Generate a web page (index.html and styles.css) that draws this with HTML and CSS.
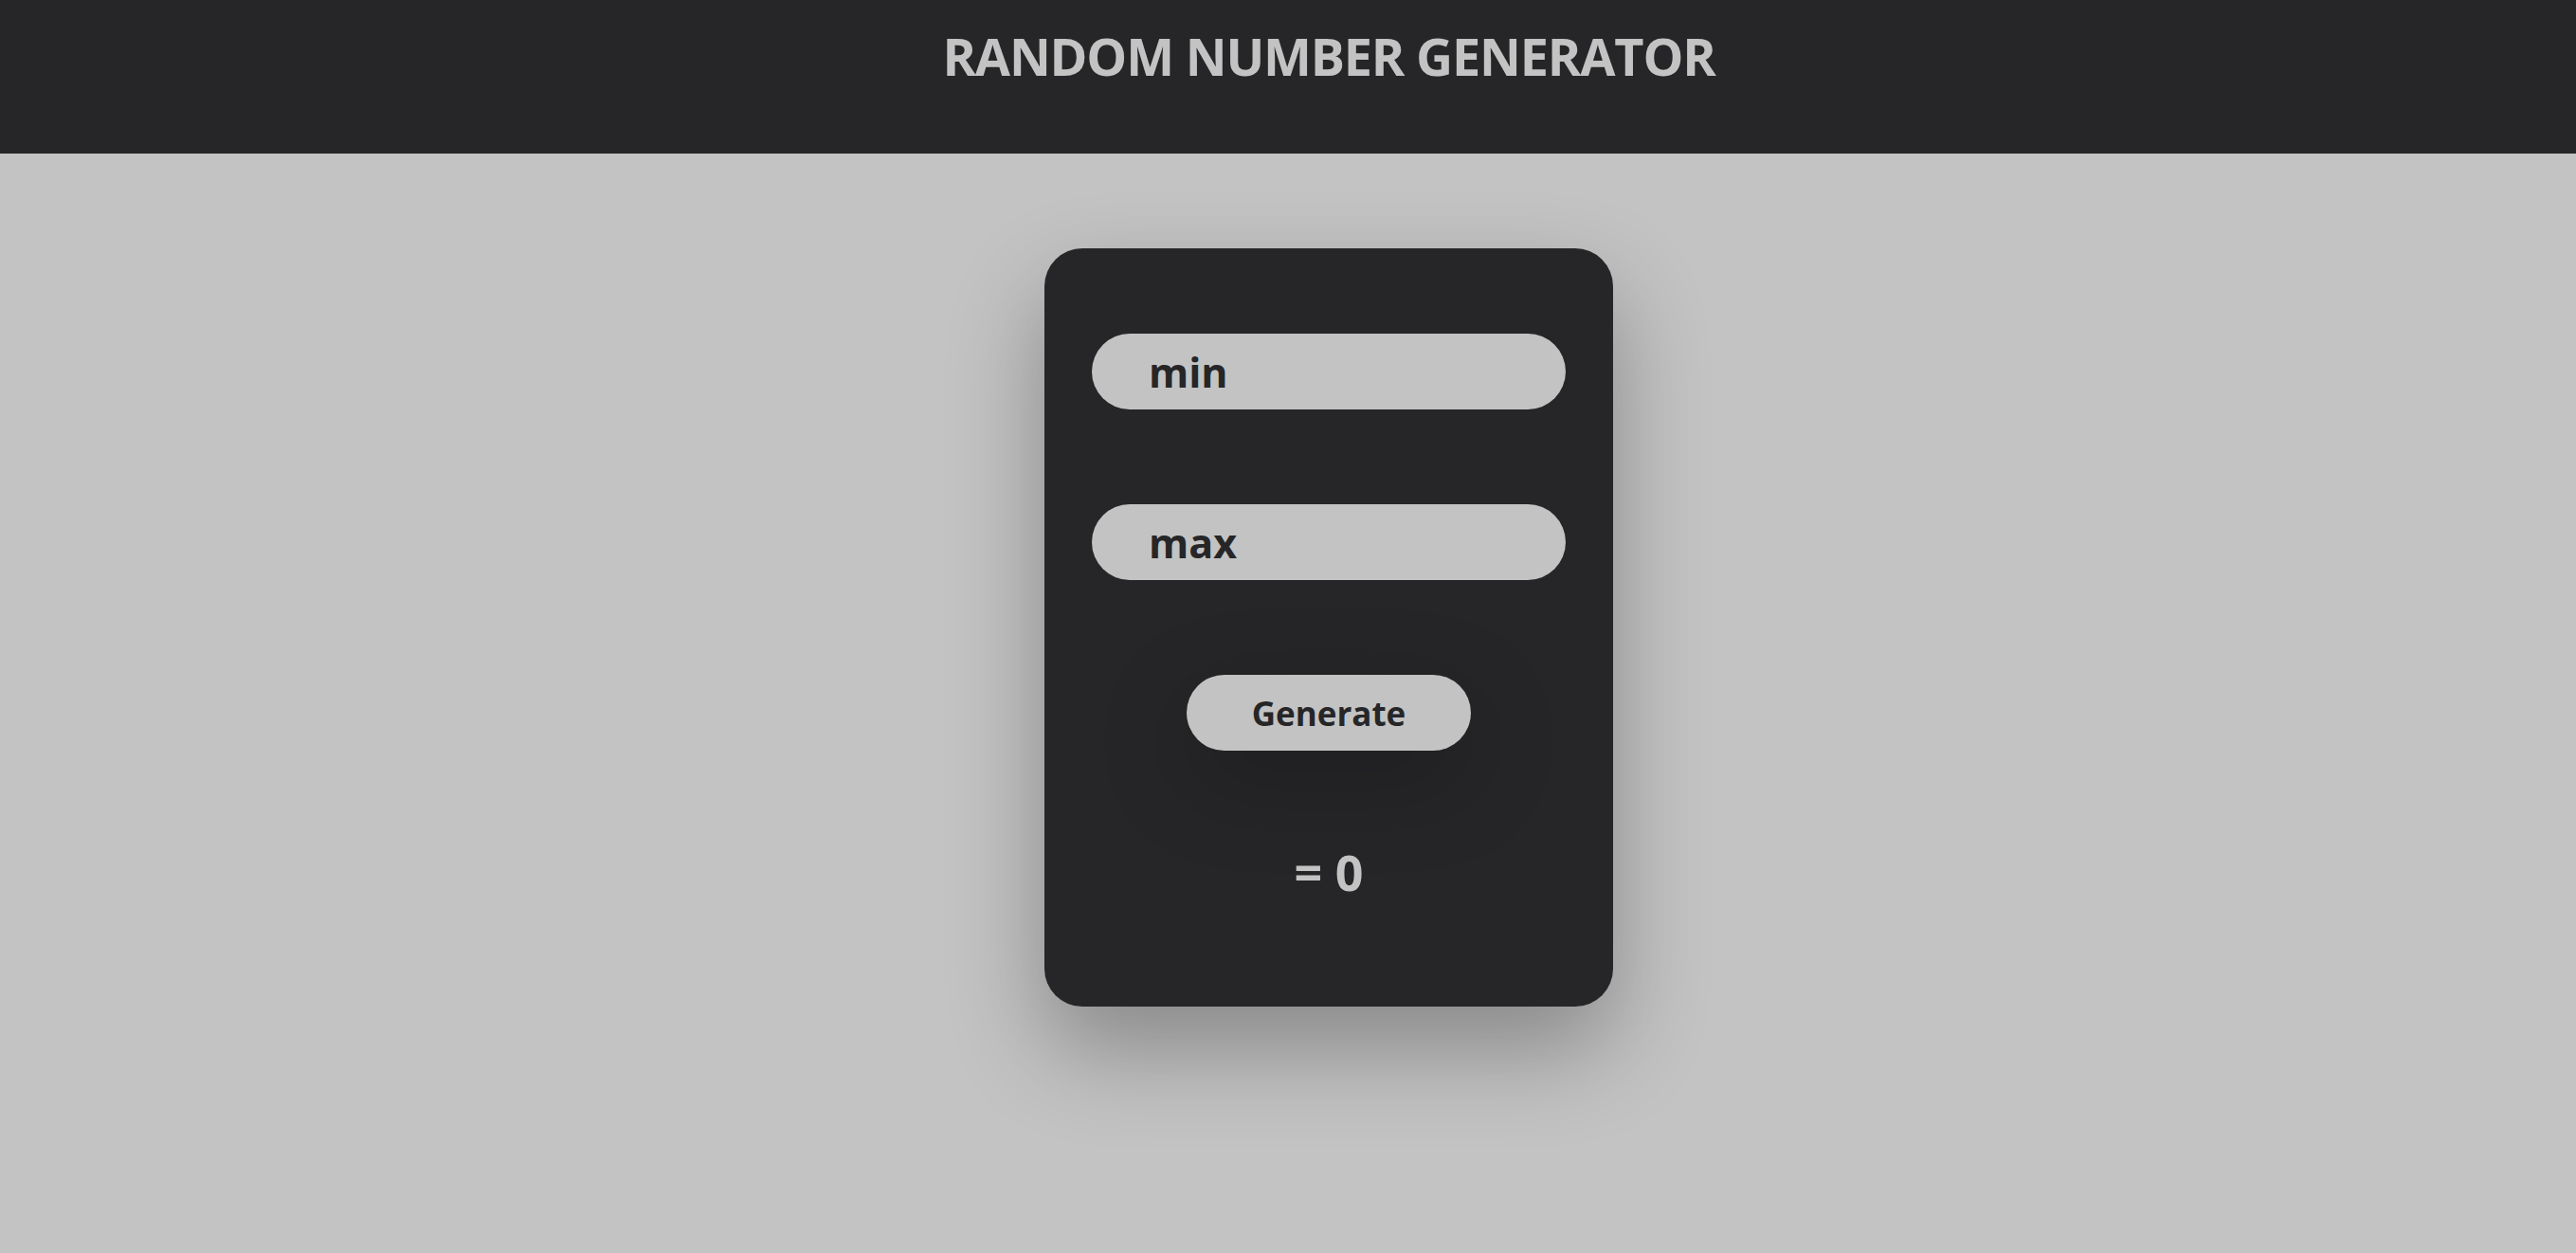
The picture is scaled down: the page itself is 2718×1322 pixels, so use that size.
FILE: index.html
```html
<!doctype html>
<html>
<head>
<meta charset="utf-8">
<link rel="stylesheet" href="styles.css">
<title>Random Number Generator</title>
</head>
<body>
<div id="header">
	<h1>RANDOM NUMBER GENERATOR</h1>
</div>
<div id="content">
	<div class="card">
		<input id="min" class="field" type="number" placeholder="min">
		<input id="max" class="field" type="number" placeholder="max">
		<button class="generate" onclick="generate()">Generate</button>
		<div class="result">= <span id="result">0</span></div>
	</div>
</div>
<script>
function $(id) {
	return document.getElementById(id);
}

function generate() {
	var min = parseInt($('min').value) || 0;
	var max = parseInt($('max').value) || 0;
	if (max < min) {
		var t = min; min = max; max = t;
	}
	$('result').innerHTML = Math.floor(Math.random() * (max - min + 1)) + min;
}
</script>
</body>
</html>
```

FILE: styles.css
```css
body {
	margin: 0;
	background-color: #c3c3c3;
	font-family: "Open Sans", "Noto Sans", sans-serif;
	color: #262628;
	overflow: hidden;
}

#header {
	background-color: #262628;
	height: 162px;
	box-sizing: border-box;
	padding-top: 29px;
	padding-left: 86px;
}

h1 {
	margin: 0;
	text-align: center;
	color: #c3c3c3;
	font-size: 54px;
	font-weight: 700;
	line-height: 60px;
	letter-spacing: -1.2px;
}

#content {
	display: flex;
	justify-content: center;
	padding-top: 100px;
	padding-left: 86px;
	padding-bottom: 300px;
}

.card {
	width: 600px;
	height: 800px;
	box-sizing: border-box;
	padding: 90px 50px 0;
	background-color: #262628;
	border-radius: 40px;
	box-shadow: 0 45px 100px rgba(0, 0, 0, 0.3);
	display: flex;
	flex-direction: column;
	align-items: center;
}

.field {
	width: 500px;
	height: 80px;
	box-sizing: border-box;
	margin: 0 0 100px;
	padding: 0 0 0 60px;
	border: none;
	outline: none;
	border-radius: 40px;
	background-color: #c3c3c3;
	color: #262628;
	font-family: inherit;
	font-size: 43px;
	font-weight: 700;
	-moz-appearance: textfield;
}

.field::placeholder {
	color: #262628;
	opacity: 1;
}

.field::-webkit-outer-spin-button,
.field::-webkit-inner-spin-button {
	-webkit-appearance: none;
	margin: 0;
}

.generate {
	width: 300px;
	height: 80px;
	border: none;
	border-radius: 40px;
	background-color: #c3c3c3;
	color: #262628;
	font-family: inherit;
	font-size: 35px;
	font-weight: 700;
	cursor: pointer;
	box-shadow: 0 30px 100px rgba(0, 0, 0, 0.22);
}

.result {
	margin-top: 98px;
	color: #c3c3c3;
	font-size: 52px;
	font-weight: 700;
	line-height: 60px;
}
```
